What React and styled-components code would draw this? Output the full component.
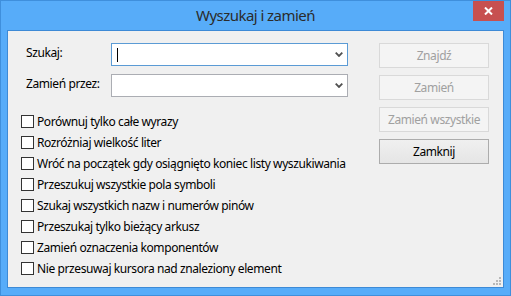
import React from 'react';
import styled, { createGlobalStyle, css } from 'styled-components';

const Global = createGlobalStyle`
  html, body { margin: 0; padding: 0; background: #ffffff; }
  body { font-family: "Noto Sans", "Liberation Sans", sans-serif; }
  * { box-sizing: border-box; }
`;

const Window = styled.div`
  width: 511px;
  height: 296px;
  background: #57acf9;
  border: 1px solid #3f8fdc;
  padding: 0 6px 7px 6px;
  display: flex;
  flex-direction: column;
`;

const TitleBar = styled.div`
  height: 29px;
  display: grid;
  grid-template-columns: 1fr auto 1fr;
  align-items: start;
`;

const Title = styled.div`
  grid-column: 2;
  font-size: 15px;
  line-height: 28px;
  letter-spacing: -0.55px;
  color: #2b2b2b;
  white-space: nowrap;
`;

const CloseButton = styled.div`
  grid-column: 3;
  justify-self: end;
  width: 31px;
  height: 20px;
  background: #c75050;
  display: flex;
  align-items: center;
  justify-content: center;
`;

const Client = styled.div`
  flex: 1;
  position: relative;
  background: #f0f0f0;
  border: 1px solid #3d8ad6;
  padding: 12px 13px 0 13px;
  display: flex;
  align-items: flex-start;
  font-size: 12px;
  letter-spacing: -0.4px;
  color: #000;
`;

const LeftCol = styled.div`
  width: 328px;
  display: flex;
  flex-direction: column;
`;

const Fields = styled.div`
  display: grid;
  grid-template-columns: 90px 237px;
  grid-auto-rows: 23px;
  row-gap: 8px;
`;

const Label = styled.label`
  padding-left: 5px;
  padding-top: 2px;
  line-height: 16px;
  white-space: nowrap;
`;

const Combo = styled.div`
  background: #fff;
  border: 1px solid ${p => (p.$focused ? '#5b9bd5' : '#abadb3')};
  display: flex;
  align-items: center;
  padding: 0 4px 0 5px;
`;

const Caret = styled.span`
  width: 1px;
  height: 14px;
  background: #000;
`;

const Arrow = styled.svg`
  margin-left: auto;
`;

const CheckList = styled.div`
  margin-top: 14px;
  display: flex;
  flex-direction: column;
`;

const CheckRow = styled.label`
  height: 21px;
  display: flex;
  align-items: center;
  gap: 3px;
  white-space: nowrap;
`;

const Box = styled.span`
  width: 13px;
  height: 13px;
  border: 1px solid #333;
  background: #fff;
  flex: none;
`;

const RightCol = styled.div`
  margin-left: 30px;
  width: 110px;
  display: flex;
  flex-direction: column;
  gap: 7px;
`;

const Button = styled.div`
  height: 25px;
  display: flex;
  align-items: center;
  justify-content: center;
  white-space: nowrap;
  ${p => p.$disabled ? css`
    background: #f4f4f4;
    border: 1px solid #d9d9d9;
    color: #a0a0a0;
  ` : css`
    background: linear-gradient(#f0f0f0, #e5e5e5);
    border: 1px solid #acacac;
    color: #000;
  `}
`;

const Grip = styled.svg`
  position: absolute;
  right: 2px;
  bottom: 2px;
`;

const ComboArrow = () => (
  <Arrow width="8" height="5" viewBox="0 0 8 5">
    <path d="M0.7 0.7 L4 4 L7.3 0.7" stroke="#505050" strokeWidth="1.8" fill="none" />
  </Arrow>
);

const options = [
  'Porównuj tylko całe wyrazy',
  'Rozróżniaj wielkość liter',
  'Wróć na początek gdy osiągnięto koniec listy wyszukiwania',
  'Przeszukuj wszystkie pola symboli',
  'Szukaj wszystkich nazw i numerów pinów',
  'Przeszukaj tylko bieżący arkusz',
  'Zamień oznaczenia komponentów',
  'Nie przesuwaj kursora nad znaleziony element',
];

export default function App() {
  return (
    <>
      <Global />
      <Window>
        <TitleBar>
          <Title>Wyszukaj i zamień</Title>
          <CloseButton>
            <svg width="9" height="8" viewBox="0 0 9 8">
              <path d="M1 0.5 L8 7.5 M8 0.5 L1 7.5" stroke="#fff" strokeWidth="2" />
            </svg>
          </CloseButton>
        </TitleBar>
        <Client>
          <LeftCol>
            <Fields>
              <Label>Szukaj:</Label>
              <Combo $focused>
                <Caret />
                <ComboArrow />
              </Combo>
              <Label>Zamień przez:</Label>
              <Combo>
                <ComboArrow />
              </Combo>
            </Fields>
            <CheckList>
              {options.map(o => (
                <CheckRow key={o}>
                  <Box />
                  {o}
                </CheckRow>
              ))}
            </CheckList>
          </LeftCol>
          <RightCol>
            <Button $disabled>Znajdź</Button>
            <Button $disabled>Zamień</Button>
            <Button $disabled>Zamień wszystkie</Button>
            <Button>Zamknij</Button>
          </RightCol>
          <Grip width="8" height="8" viewBox="0 0 8 8">
            <rect x="6" y="0" width="2" height="2" fill="#b8b8b8" />
            <rect x="3" y="3" width="2" height="2" fill="#b8b8b8" />
            <rect x="6" y="3" width="2" height="2" fill="#b8b8b8" />
            <rect x="0" y="6" width="2" height="2" fill="#b8b8b8" />
            <rect x="3" y="6" width="2" height="2" fill="#b8b8b8" />
            <rect x="6" y="6" width="2" height="2" fill="#b8b8b8" />
          </Grip>
        </Client>
      </Window>
    </>
  );
}
